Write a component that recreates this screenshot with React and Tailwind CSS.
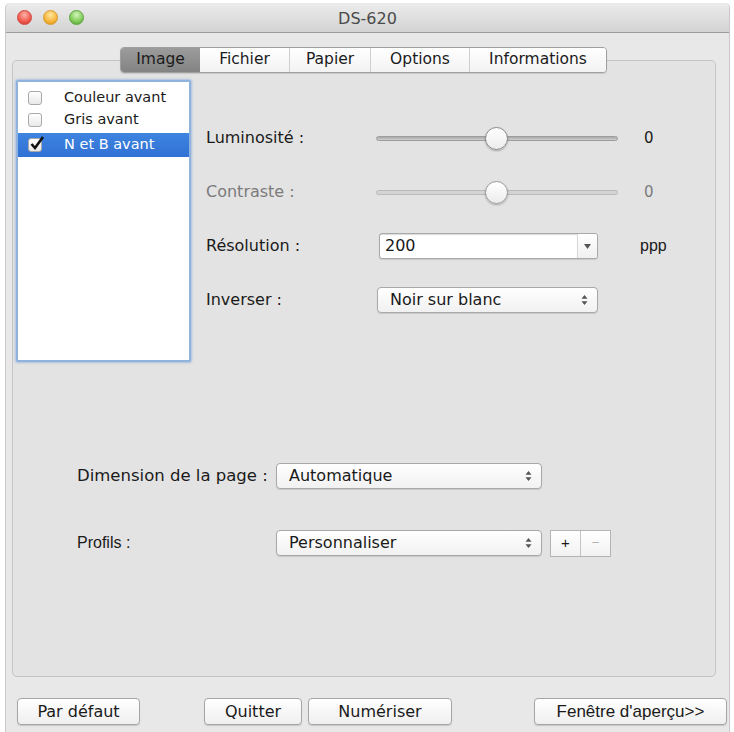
import React from 'react';

const ui = { fontFamily: '"DejaVu Sans", "Noto Sans", sans-serif' };
const arial = { fontFamily: '"Liberation Sans", Arial, sans-serif' };

function UpDown({ className = '' }) {
  return (
    <svg className={className} width="7" height="12" viewBox="0 0 7 12">
      <path d="M3.5 1 L6.5 4.8 L0.5 4.8 Z" fill="#555" />
      <path d="M3.5 11 L6.5 7.2 L0.5 7.2 Z" fill="#555" />
    </svg>
  );
}

function Popup({ label, width }) {
  return (
    <div
      className="h-[26px] flex items-center justify-between pl-3 pr-[9px] rounded-[4px] border border-[#a8a8a8] bg-gradient-to-b from-white to-[#f1f1f1] shadow-[0_1px_1px_rgba(0,0,0,0.12)] text-[16px] text-[#1a1a1a]"
      style={{ width }}
    >
      <span>{label}</span>
      <UpDown />
    </div>
  );
}

function Slider({ disabled }) {
  return (
    <div className="relative w-[242px] h-[24px] flex items-center">
      <div
        className={`w-full h-[5px] rounded-full border ${
          disabled ? 'border-[#b9b9b9] bg-[#d4d4d4]' : 'border-[#9d9d9d] bg-gradient-to-b from-[#a9a9a9] to-[#cfcfcf]'
        }`}
      />
      <div
        className={`absolute left-[109px] top-[1px] w-[23px] h-[23px] rounded-full border bg-gradient-to-b from-white to-[#ececec] shadow-[0_1px_2px_rgba(0,0,0,0.25)] ${
          disabled ? 'border-[#9c9c9c]' : 'border-[#8a8a8a]'
        }`}
      />
    </div>
  );
}

function Check({ checked }) {
  return (
    <div className="relative w-[14px] h-[14px] rounded-[3px] border border-[#a9a9a9] bg-gradient-to-b from-white to-[#e9e9e9]">
      {checked && (
        <svg className="absolute -top-[4px] left-[0px]" width="17" height="17" viewBox="0 0 17 17">
          <path d="M2.5 9 L6 13 L14 2" fill="none" stroke="#111" strokeWidth="2.6" />
        </svg>
      )}
    </div>
  );
}

function Button({ children, className = '', font = ui, size = 'text-[16px]' }) {
  return (
    <div
      className={`h-[27px] flex items-center justify-center rounded-[4px] border border-[#a6a6a6] bg-gradient-to-b from-white to-[#efefef] shadow-[0_1px_1px_rgba(0,0,0,0.15)] text-[#1a1a1a] ${size} ${className}`}
      style={font}
    >
      {children}
    </div>
  );
}

const tabs = [
  { name: 'Image', w: 79 },
  { name: 'Fichier', w: 89 },
  { name: 'Papier', w: 81 },
  { name: 'Options', w: 99 },
  { name: 'Informations', w: 137 },
];

export default function App() {
  return (
    <div className="w-[734px] h-[732px] bg-white overflow-hidden" style={ui}>
      <div className="ml-[5px] mt-[3px] w-[725px] h-[729px] rounded-t-[5px] bg-[#e8e8e8] border-x border-[#c9c9c9] flex flex-col">
        {/* Title bar */}
        <div className="relative h-[30px] rounded-t-[5px] bg-gradient-to-b from-[#ececec] to-[#d3d3d3] border-b border-[#9c9c9c] flex items-center">
          <div className="flex gap-[11px] ml-[11px]">
            <div className="w-[15px] h-[15px] rounded-full border border-[#d0463f] bg-[radial-gradient(circle_at_50%_30%,#ffb2a8,#f0574d_60%,#c8342c)]" />
            <div className="w-[15px] h-[15px] rounded-full border border-[#d89a2c] bg-[radial-gradient(circle_at_50%_30%,#ffe6a0,#f6b53a_60%,#d58d16)]" />
            <div className="w-[15px] h-[15px] rounded-full border border-[#5ca63e] bg-[radial-gradient(circle_at_50%_30%,#d2f5b8,#7fca58_60%,#4c9a2d)]" />
          </div>
          <div className="absolute inset-x-0 top-[4px] text-center text-[16px] text-[#4a4a4a]">DS-620</div>
        </div>

        {/* Tabs */}
        <div className="mt-[14px] ml-[114px] flex relative z-10 -mb-[13px] h-[26px]">
          <div className="flex rounded-[4px] border border-[#9f9f9f] overflow-hidden shadow-[0_1px_1px_rgba(0,0,0,0.12)]">
            {tabs.map((t, i) => (
              <div
                key={t.name}
                className={`flex items-center justify-center text-[15.5px] ${
                  i === 0
                    ? 'bg-gradient-to-b from-[#9c9c9c] to-[#838383] text-[#1b1b1b]'
                    : 'bg-gradient-to-b from-white to-[#f3f3f3] text-[#1b1b1b] border-l border-[#cfcfcf]'
                } ${i === 1 ? 'border-l-0' : ''}`}
                style={{ width: t.w }}
              >
                {t.name}
              </div>
            ))}
          </div>
        </div>

        {/* Group box */}
        <div className="ml-[6px] w-[704px] h-[617px] rounded-[5px] border border-[#c4c4c4] bg-[#e3e3e3] flex flex-col">
          <div className="flex mt-[19px]">
            {/* List */}
            <div className="ml-[3px] w-[175px] h-[282px] bg-white border-[2px] border-[#8fb3dc] rounded-[2px] shadow-[0_0_2px_1px_rgba(120,160,215,0.5)] pt-[5px]">
              <div className="h-[22px] flex items-center pl-[10px] gap-[22px] text-[14.5px] text-[#1a1a1a]">
                <Check />
                <span>Couleur avant</span>
              </div>
              <div className="h-[22px] flex items-center pl-[10px] gap-[22px] text-[14.5px] text-[#1a1a1a]">
                <Check />
                <span>Gris avant</span>
              </div>
              <div className="mt-[2px] h-[24px] flex items-center pl-[10px] gap-[22px] text-[14.5px] text-white bg-gradient-to-b from-[#3f84e0] to-[#2f71d5]">
                <Check checked />
                <span>N et B avant</span>
              </div>
            </div>

            {/* Controls */}
            <div className="ml-[15px] pt-[45px] flex flex-col gap-[28px]">
              <div className="h-[26px] flex items-center">
                <span className="w-[170px] text-[16px] text-[#1a1a1a]">Luminosité :</span>
                <Slider />
                <span className="ml-[26px] text-[15px] text-[#1a1a1a]">0</span>
              </div>
              <div className="h-[26px] flex items-center">
                <span className="w-[170px] text-[16px] text-[#7b7b7b]">Contraste :</span>
                <Slider disabled />
                <span className="ml-[26px] text-[15px] text-[#7b7b7b]">0</span>
              </div>
              <div className="h-[26px] flex items-center">
                <span className="w-[173px] text-[16px] text-[#1a1a1a]">Résolution :</span>
                <div className="w-[219px] h-[26px] flex border border-[#a9a9a9] rounded-[3px] bg-white shadow-[0_1px_1px_rgba(0,0,0,0.12)]">
                  <div className="flex-1 flex items-center pl-[5px] text-[16px] text-[#1a1a1a] shadow-[inset_0_1px_1px_rgba(0,0,0,0.15)]">200</div>
                  <div className="w-[20px] flex items-center justify-center border-l border-[#d8d8d8] bg-gradient-to-b from-white to-[#f0f0f0] rounded-r-[3px]">
                    <svg width="7" height="5" viewBox="0 0 7 5">
                      <path d="M0 0 L7 0 L3.5 5 Z" fill="#555" />
                    </svg>
                  </div>
                </div>
                <span className="ml-[42px] text-[16px] text-[#1a1a1a]" style={arial}>ppp</span>
              </div>
              <div className="h-[26px] flex items-center">
                <span className="w-[171px] text-[16px] text-[#1a1a1a]">Inverser :</span>
                <Popup label="Noir sur blanc" width={221} />
              </div>
            </div>
          </div>

          {/* Page size / Profiles */}
          <div className="mt-[101px] ml-[64px] flex flex-col gap-[41px]">
            <div className="h-[26px] flex items-center">
              <span className="w-[199px] text-[16.5px] text-[#1a1a1a]">Dimension de la page :</span>
              <Popup label="Automatique" width={266} />
            </div>
            <div className="h-[26px] flex items-center">
              <span className="w-[199px] text-[16px] text-[#1a1a1a]" style={arial}>Profils :</span>
              <Popup label="Personnaliser" width={266} />
              <div className="ml-[8px] flex h-[27px] border border-[#b4b4b4] bg-gradient-to-b from-white to-[#f2f2f2]">
                <div className="w-[30px] flex items-center justify-center text-[15px] text-[#1a1a1a] border-r border-[#c4c4c4]" style={arial}>+</div>
                <div className="w-[29px] flex items-center justify-center text-[13px] text-[#b0b0b0]" style={arial}>−</div>
              </div>
            </div>
          </div>
        </div>

        {/* Bottom buttons */}
        <div className="mt-[21px] ml-[11px] flex items-center">
          <Button className="w-[123px]">Par défaut</Button>
          <Button className="ml-[64px] w-[98px]">Quitter</Button>
          <Button className="ml-[6px] w-[144px]">Numériser</Button>
          <Button className="ml-[82px] w-[193px]" font={arial} size="text-[17px]">Fenêtre d&apos;aperçu&gt;&gt;</Button>
        </div>
      </div>
    </div>
  );
}
